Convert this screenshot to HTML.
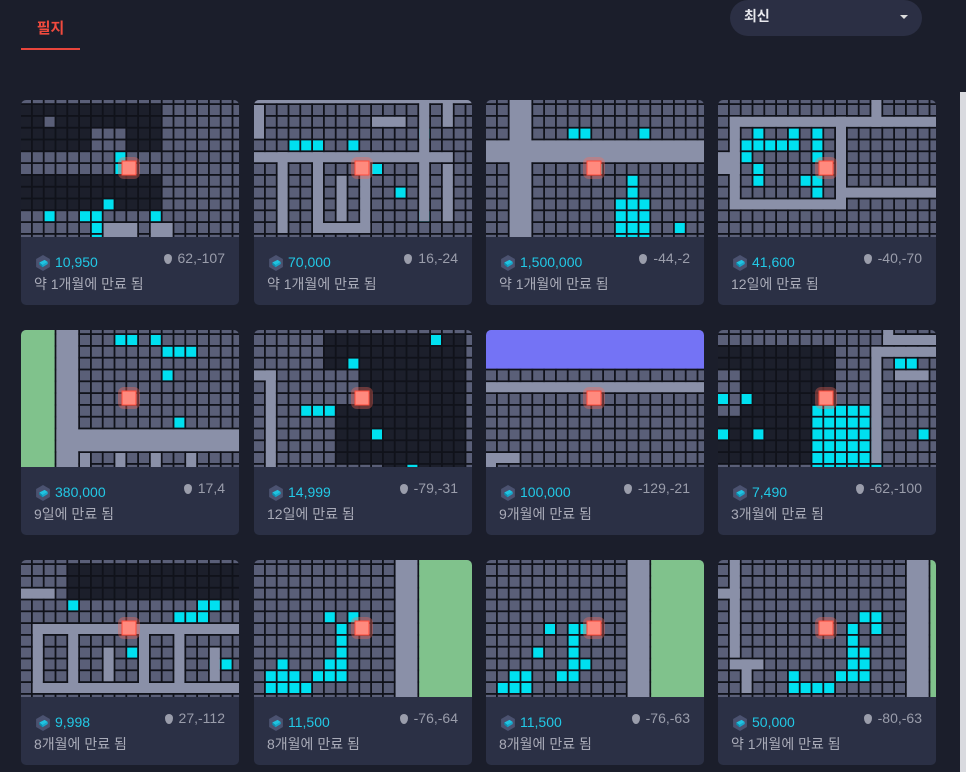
<!DOCTYPE html>
<html><head><meta charset="utf-8">
<style>
*{margin:0;padding:0;box-sizing:border-box}
body{width:966px;height:772px;overflow:hidden;background:#1b1e2b;font-family:"Liberation Sans","Noto Sans CJK KR",sans-serif;position:relative}
.tab{position:absolute;left:21px;top:0;width:59px;height:50px;border-bottom:2px solid #e8453c;color:#f04a3e;font-size:15px;font-weight:bold;text-align:center;line-height:58px}
.dd{position:absolute;left:730px;top:0;width:192px;height:36px;border-radius:18px;background:#2b2f44;color:#e8e9ee;font-size:14px;font-weight:bold;padding-left:14px;line-height:32px}
.dd:after{content:"";position:absolute;right:14px;top:15px;border:4px solid transparent;border-top:4px solid #ddd;border-bottom:0}
.sb{position:absolute;left:960px;top:92px;width:6px;height:680px;background:#d9dadf}
.card{position:absolute;width:218px;height:205px;border-radius:5px;overflow:hidden;background:#2b3045}
.card>svg{position:absolute;left:0;top:0}
.info{position:absolute;left:0;top:137px;width:218px;height:68px}
.price{position:absolute;left:34px;top:17px;color:#22c9e6;font-size:14px}
.coin{position:absolute;left:13px;top:17px;width:18px;height:18px}
.loc{position:absolute;right:14px;top:13px;color:#9a9dab;font-size:14px}
.loc i{display:inline-block;width:8px;height:10px;background:#9a9dab;border-radius:50% 50% 50% 50%/40% 40% 60% 60%;margin-right:6px;vertical-align:-1px}
.exp{position:absolute;left:13px;top:37px;color:#a9abb8;font-size:14px}
</style></head><body>
<div class="tab">필지</div>
<div class="dd">최신</div>
<div class="sb"></div>
<div id="root"></div>
<script>
var P=11.8;
var cards=[
[21,100,"10,950","62,-107","약 1개월에 만료 됨",[["d",0,0,12,4],["d",0,6,12,3],["n",2,1,1,1],["n",6,2,3,2],["c",8,4,1,2],["c",7,8,1,1],["c",2,9,1,1],["c",5,9,2,1],["c",6,10,1,2],["c",11,9,1,1],["r",7,10,3,2],["r",11,10,2,2]]],
[254,100,"70,000","16,-24","약 1개월에 만료 됨",[["r",0,-1,19,1],["r",0,4,17,1],["r",2,4,1,7],["r",5,4,1,7],["r",9,4,1,7],["r",14,-1,1,11],["r",16,-1,1,3],["r",5,10,5,1],["r",7,6,1,4],["r",0,0,1,3],["r",10,1,3,1],["r",16,5,1,5],["c",3,3,3,1],["c",8,3,1,1],["c",10,5,1,1],["c",12,7,1,1],["c",14,9,1,1],["c",14,2,1,1]]],
[486,100,"1,500,000","-44,-2","약 1개월에 만료 됨",[["r",2,-1,2,13],["r",0,3,19,2],["c",7,2,2,1],["c",13,2,1,1],["c",9,5,1,1],["c",12,6,1,2],["c",11,8,3,1],["c",11,9,3,3],["c",16,10,1,1]]],
[718,100,"41,600","-40,-70","12일에 만료 됨",[["r",1,1,10,1],["r",1,8,10,1],["r",1,1,1,8],["r",10,1,1,8],["r",0,4,2,2],["r",10,7,9,1],["r",13,-1,1,3],["r",10,1,9,1],["c",3,2,1,1],["c",6,2,1,2],["c",8,2,1,1],["c",2,3,5,1],["c",3,5,1,1],["c",8,3,1,2],["c",3,6,1,1],["c",7,6,2,1],["c",8,7,1,1],["c",2,4,1,1]]],
[21,330,"380,000","17,4","9일에 만료 됨",[["g",0,-1,3,13],["r",3,-1,2,13],["r",3,8,16,2],["r",5,10,1,2],["r",8,10,1,2],["r",11,10,1,2],["r",14,10,1,2],["c",8,0,2,1],["c",11,0,1,1],["c",12,1,1,1],["c",13,1,2,1],["c",12,3,1,1],["c",13,7,1,1]]],
[254,330,"14,999","-79,-31","12일에 만료 됨",[["d",6,0,12,3],["d",9,3,9,3],["d",7,6,11,5],["d",11,6,7,6],["r",1,3,1,9],["r",0,3,2,1],["c",15,0,1,1],["c",8,2,1,1],["c",4,6,3,1],["c",10,8,1,1],["c",13,11,1,1]]],
[486,330,"100,000","-129,-21","9개월에 만료 됨",[["p",0,-1,19,4],["r",0,4,19,1],["r",0,10,3,1],["r",0,10,1,2]]],
[718,330,"7,490","-62,-100","3개월에 만료 됨",[["d",0,1,10,2],["d",2,3,8,6],["d",0,7,4,3],["d",0,9,8,2],["c",0,5,1,1],["c",2,5,1,1],["c",0,8,1,1],["c",3,8,1,1],["c",8,6,5,1],["c",8,7,6,5],["r",13,1,1,10],["r",14,0,5,1],["r",13,1,6,1],["r",14,-1,1,2],["r",15,3,3,1],["c",15,2,2,1],["c",17,8,1,1]]],
[21,560,"9,998","27,-112","8개월에 만료 됨",[["d",4,0,15,3],["r",0,2,3,1],["r",1,5,18,1],["r",1,5,1,6],["r",4,5,1,6],["r",7,7,1,3],["r",10,5,1,6],["r",13,5,1,6],["r",16,7,1,3],["r",1,10,18,1],["c",4,3,1,1],["c",13,4,3,1],["c",15,3,2,1],["c",8,5,1,1],["c",17,5,1,1],["c",9,7,1,1],["c",16,8,2,1]]],
[254,560,"11,500","-76,-64","8개월에 만료 됨",[["r",12,-1,2,13],["g",14,-1,5,13],["c",7,5,1,1],["c",8,4,1,1],["c",7,6,1,4],["c",6,8,1,1],["c",5,9,3,1],["c",2,8,1,1],["c",1,9,3,2],["c",4,10,1,1],["c",6,4,1,1]]],
[486,560,"11,500","-76,-63","8개월에 만료 됨",[["r",12,-1,2,13],["g",14,-1,5,13],["c",5,5,1,1],["c",7,5,1,4],["c",8,8,1,1],["c",6,9,2,1],["c",4,7,1,1],["c",2,9,2,1],["c",1,10,3,1],["c",8,5,1,1]]],
[718,560,"50,000","-80,-63","약 1개월에 만료 됨",[["r",1,-1,1,9],["r",0,2,2,1],["r",1,8,3,1],["r",2,8,1,3],["r",16,-1,2,13],["g",18,-1,1,13],["c",11,5,1,4],["c",10,9,3,1],["c",12,7,1,3],["c",13,5,1,1],["c",12,4,2,1],["c",6,9,1,2],["c",7,10,3,1]]]
];
var col={d:"#1c1f2b",n:"#5a5f78",c:"#00e0f0",r:"#8a90a8",g:"#80c28c",p:"#7473f5"};
var h="";
cards.forEach(function(c){
 var s='<svg width="218" height="137" viewBox="0 0 218 137"><rect width="218" height="137" fill="#10121a"/>';
 var grid={};
 for(var j=-1;j<12;j++)for(var i=0;i<19;i++)grid[i+","+j]="n";
 c[5].forEach(function(f){if(f[0]=="r"||f[0]=="g"||f[0]=="p")return;for(var j=f[2];j<f[2]+f[4];j++)for(var i=f[1];i<f[1]+f[3];i++)grid[i+","+j]=f[0];});
 for(var j=-1;j<12;j++)for(var i=0;i<19;i++){s+='<rect x="'+(i*P).toFixed(1)+'" y="'+(5+j*P).toFixed(1)+'" width="10" height="10" fill="'+col[grid[i+","+j]]+'"/>';}
 c[5].forEach(function(f){if(f[0]!="r"&&f[0]!="g"&&f[0]!="p")return;s+='<rect x="'+(f[1]*P).toFixed(1)+'" y="'+(5+f[2]*P).toFixed(1)+'" width="'+(f[3]*P-1.8).toFixed(1)+'" height="'+(f[4]*P-1.8).toFixed(1)+'" fill="'+col[f[0]]+'"/>';});
 s+='<rect x="97" y="57" width="22" height="22" fill="#ff6a5a" opacity="0.35" rx="6"/><rect x="101" y="61" width="14" height="14" fill="#ff8a7e" stroke="#ff4a3a" stroke-width="1"/></svg>';
 h+='<div class="card" style="left:'+c[0]+'px;top:'+c[1]+'px">'+s+'<div class="info"><svg class="coin" viewBox="0 0 17 17"><polygon points="8.5,1 15,4.7 15,12.3 8.5,16 2,12.3 2,4.7" fill="#4b5270"/><polygon points="5,8 10,5.5 13,7.5 8,10.5" fill="#1fc3e0"/><polygon points="5,8 8,10.5 8,12.5 5,10" fill="#0b8fb0"/><polygon points="8,10.5 13,7.5 13,9.5 8,12.5" fill="#17a8cc"/></svg><div class="price">'+c[2]+'</div><div class="loc"><i></i>'+c[3]+'</div><div class="exp">'+c[4]+'</div></div></div>';
});
document.getElementById("root").innerHTML=h;
</script>
</body></html>
